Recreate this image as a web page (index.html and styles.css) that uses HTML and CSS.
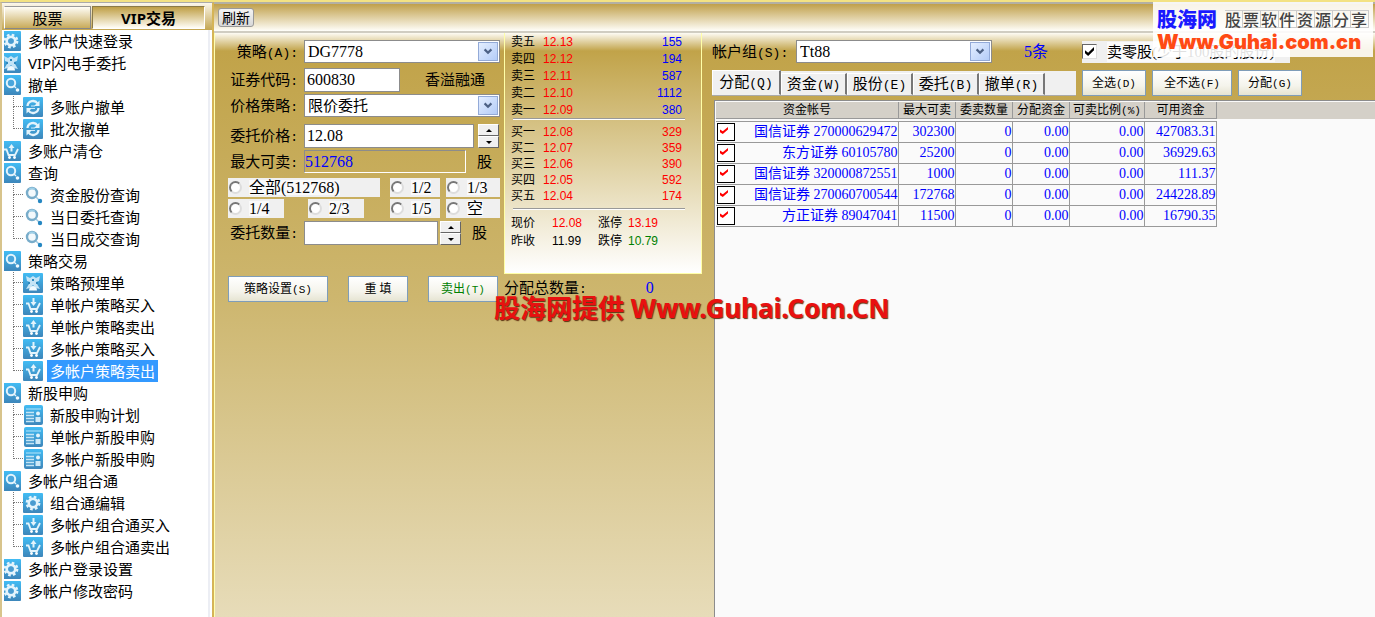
FILE: index.html
```html
<!DOCTYPE html>
<html lang="zh-CN">
<head>
<meta charset="utf-8">
<title>VIP交易</title>
<link rel="stylesheet" href="styles.css">
</head>
<body>
<svg class="defs" aria-hidden="true">
  <defs>
    <linearGradient id="tile" x1="0" y1="0" x2="0" y2="1"><stop offset="0" stop-color="#42bcf4"/><stop offset="1" stop-color="#3d86ba"/></linearGradient>
    <symbol id="gear" viewBox="0 0 20 20"><rect width="20" height="20" rx="1" fill="url(#tile)"/><circle cx="10" cy="10" r="6.2" fill="none" stroke="#e4f4fc" stroke-width="2.4" stroke-dasharray="2.6 2.27"/><circle cx="10" cy="10" r="4.2" fill="none" stroke="#e4f4fc" stroke-width="2.8"/><circle cx="10" cy="10" r="2.6" fill="#4a9bd0"/></symbol>
    <symbol id="flash" viewBox="0 0 20 20"><rect width="20" height="20" rx="1" fill="url(#tile)"/><path d="M3 3l4 2 3-2 3 2 4-2-1 5-3 1 1 2 3 5-4-1-3-3-3 3-4 1 3-5 1-2-3-1z" fill="#c4e4f6"/><path d="M6 17.500c0-6 8-6 8 0z" fill="#f0faff"/><path d="M9 6h2v2H9zM5 9h2v2H5zM13 9h2v2h-2z" fill="#2f89be"/></symbol>
    <symbol id="search" viewBox="0 0 20 20"><rect width="20" height="20" rx="1" fill="url(#tile)"/><circle cx="10" cy="8" r="4.2" fill="#4aa6dc" stroke="#e4f4fc" stroke-width="2"/><path d="M13 11l2 2" stroke="#e4f4fc" stroke-width="1.5"/><circle cx="16.500" cy="15" r="1.800" fill="#f1faff"/></symbol>
    <symbol id="lens" viewBox="0 0 20 20"><circle cx="9" cy="8" r="5" fill="#f3f9fc" stroke="#78acca" stroke-width="2.4"/><path d="M6 4.500a5 5 0 0 1 6 0" fill="none" stroke="#9fd0e8" stroke-width="1.500"/><path d="M13 12l3 3" stroke="#9cc7de" stroke-width="1.5"/><circle cx="17" cy="16" r="2.2" fill="#2587c2"/></symbol>
    <symbol id="cycle" viewBox="0 0 20 20"><rect width="20" height="20" rx="1" fill="url(#tile)"/><path d="M4.500 9C5 3.500 12 2.500 14.500 6.500M15.500 11C15 16.500 8 17.500 5.500 13.500" fill="none" stroke="#e4f4fc" stroke-width="2.300"/><path d="M16.500 3.500v5.500h-5.500zM3.500 16.500V11H9z" fill="#e4f4fc"/><path d="M8 9h4M8 11.500h4" stroke="#cdeafa"/></symbol>
    <symbol id="sell" viewBox="0 0 20 20"><rect width="20" height="20" rx="1" fill="url(#tile)"/><path d="M3 8.500h2.500l2 5.500h6.500l3-6" fill="none" stroke="#e4f4fc" stroke-width="1.800"/><path d="M10.500 3l3 4h-2v3.500h-2V7h-2z" fill="#e4f4fc"/><circle cx="8.500" cy="16.500" r="1.400" fill="#fff"/><circle cx="13.500" cy="16.500" r="1.400" fill="#fff"/></symbol>
    <symbol id="buy" viewBox="0 0 20 20"><rect width="20" height="20" rx="1" fill="url(#tile)"/><path d="M3 8.500h2.500l2 5.500h6.500l3-6" fill="none" stroke="#e4f4fc" stroke-width="1.800"/><path d="M10.500 11l3-4h-2V3h-2v4h-2z" fill="#e4f4fc"/><circle cx="8.500" cy="16.500" r="1.400" fill="#fff"/><circle cx="13.500" cy="16.500" r="1.400" fill="#fff"/></symbol>
    <symbol id="form" viewBox="0 0 20 20"><rect x="1" width="19" height="20" rx="2" fill="url(#tile)"/><path d="M3 4h15" stroke="#8fd4f5" stroke-width="1.500"/><path d="M3 7.500h8M3 10.500h8M3 13.500h8M3 16.500h8" stroke="#c5e6f6" stroke-width="1.500"/><circle cx="15" cy="8.500" r="2" fill="#e4f4fc"/><path d="M12.500 17v-5h5v5z" fill="#cfeaf8"/></symbol>
    <symbol id="chev" viewBox="0 0 20 20"><path d="M6 7.500l4 4 4-4" fill="none" stroke="#4d6185" stroke-width="2.600"/></symbol>
  </defs>
</svg>
<div class="app">
  <aside class="side">
    <div class="side-tabs">
      <button class="stab">股票</button>
      <button class="stab on">VIP交易</button>
    </div>
    <ul class="tree">
      <li><a href="#"><svg><use href="#gear"/></svg><span>多帐户快速登录</span></a></li>
      <li><a href="#"><svg><use href="#flash"/></svg><span>VIP闪电手委托</span></a></li>
      <li><a href="#"><svg><use href="#search"/></svg><span>撤单</span></a>
        <ul>
          <li><i></i><a href="#"><svg><use href="#cycle"/></svg><span>多账户撤单</span></a></li>
          <li><i></i><a href="#"><svg><use href="#cycle"/></svg><span>批次撤单</span></a></li>
        </ul></li>
      <li><a href="#"><svg><use href="#sell"/></svg><span>多账户清仓</span></a></li>
      <li><a href="#"><svg><use href="#search"/></svg><span>查询</span></a>
        <ul>
          <li><i></i><a href="#"><svg><use href="#lens"/></svg><span>资金股份查询</span></a></li>
          <li><i></i><a href="#"><svg><use href="#lens"/></svg><span>当日委托查询</span></a></li>
          <li><i></i><a href="#"><svg><use href="#lens"/></svg><span>当日成交查询</span></a></li>
        </ul></li>
      <li><a href="#"><svg><use href="#search"/></svg><span>策略交易</span></a>
        <ul>
          <li><i></i><a href="#"><svg><use href="#flash"/></svg><span>策略预埋单</span></a></li>
          <li><i></i><a href="#"><svg><use href="#buy"/></svg><span>单帐户策略买入</span></a></li>
          <li><i></i><a href="#"><svg><use href="#sell"/></svg><span>单帐户策略卖出</span></a></li>
          <li><i></i><a href="#"><svg><use href="#buy"/></svg><span>多帐户策略买入</span></a></li>
          <li><i></i><a href="#" class="current"><svg><use href="#sell"/></svg><span>多帐户策略卖出</span></a></li>
        </ul></li>
      <li><a href="#"><svg><use href="#search"/></svg><span>新股申购</span></a>
        <ul>
          <li><i></i><a href="#"><svg><use href="#form"/></svg><span>新股申购计划</span></a></li>
          <li><i></i><a href="#"><svg><use href="#form"/></svg><span>单帐户新股申购</span></a></li>
          <li><i></i><a href="#"><svg><use href="#form"/></svg><span>多帐户新股申购</span></a></li>
        </ul></li>
      <li><a href="#"><svg><use href="#search"/></svg><span>多帐户组合通</span></a>
        <ul>
          <li><i></i><a href="#"><svg><use href="#gear"/></svg><span>组合通编辑</span></a></li>
          <li><i></i><a href="#"><svg><use href="#buy"/></svg><span>多帐户组合通买入</span></a></li>
          <li><i></i><a href="#"><svg><use href="#sell"/></svg><span>多帐户组合通卖出</span></a></li>
        </ul></li>
      <li><a href="#"><svg><use href="#gear"/></svg><span>多帐户登录设置</span></a></li>
      <li><a href="#"><svg><use href="#gear"/></svg><span>多帐户修改密码</span></a></li>
    </ul>
  </aside>

  <main class="main">
    <div class="toolbar"><button class="refresh">刷新</button></div>
    <div class="content">
      <section class="trade">
        <form class="order">
          <div class="row"><label for="strategy">策略<small>(A):</small></label>
            <span class="combo"><select id="strategy"><option>DG7778</option></select><svg><use href="#chev"/></svg></span></div>
          <div class="row"><label for="code">证券代码<small>:</small></label><input id="code" class="box code" value="600830"><span class="stock">香溢融通</span></div>
          <div class="row near"><label for="ptype">价格策略<small>:</small></label>
            <span class="combo"><select id="ptype"><option>限价委托</option></select><svg><use href="#chev"/></svg></span></div>
          <div class="row far"><label for="price">委托价格<small>:</small></label><input id="price" class="box price" value="12.08">
            <span class="spin"><button type="button" aria-label="增加价格"></button><button type="button" aria-label="减少价格"></button></span></div>
          <div class="row near"><label for="max">最大可卖<small>:</small></label><input id="max" class="box max" value="512768" readonly><span class="unit">股</span></div>
          <div class="portions">
            <label class="all"><input type="radio" name="p"><span>全部(512768)</span></label>
            <label class="c3"><input type="radio" name="p"><span>1/2</span></label>
            <label class="c4"><input type="radio" name="p"><span>1/3</span></label>
            <label class="c1"><input type="radio" name="p"><span>1/4</span></label>
            <label class="c2"><input type="radio" name="p"><span>2/3</span></label>
            <label class="c3"><input type="radio" name="p"><span>1/5</span></label>
            <label class="c4"><input type="radio" name="p"><span>空</span></label>
          </div>
          <div class="row near"><label for="qty">委托数量<small>:</small></label><input id="qty" class="box qty">
            <span class="spin tight"><button type="button" aria-label="增加数量"></button><button type="button" aria-label="减少数量"></button></span><span class="unit">股</span></div>
          <div class="actions">
            <button type="button" class="btn w100">策略设置<small>(S)</small></button>
            <button type="button" class="btn w60">重 填</button>
            <button type="button" class="btn w70 green">卖出<small>(T)</small></button>
          </div>
        </form>
        <div class="market">
          <div class="quotes">
            <table class="asks">
              <tr><th>卖五</th><td>12.13</td><td>155</td></tr>
              <tr><th>卖四</th><td>12.12</td><td>194</td></tr>
              <tr><th>卖三</th><td>12.11</td><td>587</td></tr>
              <tr><th>卖二</th><td>12.10</td><td>1112</td></tr>
              <tr><th>卖一</th><td>12.09</td><td>380</td></tr>
            </table>
            <hr>
            <table class="bids">
              <tr><th>买一</th><td>12.08</td><td>329</td></tr>
              <tr><th>买二</th><td>12.07</td><td>359</td></tr>
              <tr><th>买三</th><td>12.06</td><td>390</td></tr>
              <tr><th>买四</th><td>12.05</td><td>592</td></tr>
              <tr><th>买五</th><td>12.04</td><td>174</td></tr>
            </table>
            <hr>
            <dl>
              <dt>现价</dt><dd class="red">12.08</dd><dt>涨停</dt><dd class="red">13.19</dd>
              <dt>昨收</dt><dd>11.99</dd><dt>跌停</dt><dd class="green">10.79</dd>
            </dl>
          </div>
          <div class="total"><span>分配总数量<small>:</small></span><output>0</output></div>
        </div>
      </section>

      <section class="accounts">
        <div class="group">
          <label for="group">帐户组<small>(S):</small></label>
          <span class="combo"><select id="group"><option>Tt88</option></select><svg><use href="#chev"/></svg></span>
          <span class="count">5条</span>
          <label class="odd"><input type="checkbox" checked><span>卖零股(少于100股的股份)</span></label>
        </div>
        <div class="bar">
          <div class="tabs">
            <button class="on">分配<small>(Q)</small></button><button>资金<small>(W)</small></button><button>股份<small>(E)</small></button><button>委托<small>(B)</small></button><button>撤单<small>(R)</small></button>
          </div>
          <button class="btn w64">全选<small>(D)</small></button>
          <button class="btn w80">全不选<small>(F)</small></button>
          <button class="btn w64">分配<small>(G)</small></button>
        </div>
        <div class="grid">
          <div class="grid-head">
            <span class="g1">资金帐号</span><span class="g2">最大可卖</span><span class="g2">委卖数量</span><span class="g2">分配资金</span><span class="g3">可卖比例<small>(%)</small></span><span class="g4">可用资金</span>
          </div>
          <table>
            <colgroup><col class="k0"><col class="k1"><col class="g2"><col class="g2"><col class="g2"><col class="g3"><col class="g4"></colgroup>
            <tr><td><input type="checkbox" aria-label="国信证券 270000629472" checked></td><td>国信证券 270000629472</td><td>302300</td><td>0</td><td>0.00</td><td>0.00</td><td>427083.31</td></tr>
            <tr><td><input type="checkbox" aria-label="东方证券 60105780" checked></td><td>东方证券 60105780</td><td>25200</td><td>0</td><td>0.00</td><td>0.00</td><td>36929.63</td></tr>
            <tr><td><input type="checkbox" aria-label="国信证券 320000872551" checked></td><td>国信证券 320000872551</td><td>1000</td><td>0</td><td>0.00</td><td>0.00</td><td>111.37</td></tr>
            <tr><td><input type="checkbox" aria-label="国信证券 270060700544" checked></td><td>国信证券 270060700544</td><td>172768</td><td>0</td><td>0.00</td><td>0.00</td><td>244228.89</td></tr>
            <tr><td><input type="checkbox" aria-label="方正证券 89047041" checked></td><td>方正证券 89047041</td><td>11500</td><td>0</td><td>0.00</td><td>0.00</td><td>16790.35</td></tr>
          </table>
        </div>
      </section>
    </div>
  </main>
</div>
<div class="brand">
  <div class="brand-top"><b>股海网</b><span class="tiles"><i>股</i><i>票</i><i>软</i><i>件</i><i>资</i><i>源</i><i>分</i><i>享</i></span></div>
  <div class="brand-url">Www.Guhai.com.cn</div>
</div>
<div class="stamp">股海网提供 Www.Guhai.Com.CN</div>
</body>
</html>
```
FILE: styles.css
```css
*, *::before, *::after { box-sizing: border-box; }
body {
  margin: 0;
  height: 100vh;
  overflow: hidden;
  color: #000;
  font: 15px/20px "Liberation Serif", "Noto Sans CJK SC", sans-serif;
}
button, input, select { font: inherit; color: inherit; margin: 0; padding: 0; border-radius: 0; }
small { font-family: "Liberation Mono", monospace; font-size: 13px; line-height: 1; }
.defs { position: absolute; width: 0; height: 0; }
.green { color: #008000; }
.red { color: #f00; }

.app {
  display: flex;
  height: 100%;
  border-top: 2px solid #f3e283;
  background: #f7efb4;
}

/* Navigation */
.side {
  width: 214px;
  flex: none;
  display: flex;
  flex-direction: column;
  border-left: 2px solid #d8c48c;
  border-right: 2px solid #d5b456;
  background: #fff;
  border-top: 1px solid #aaa;
}
.side-tabs {
  display: flex;
  flex: none;
  gap: 1px;
  height: 27px;
  padding: 3px 7px 1px 2px;
  background: linear-gradient(#fbf7ec, #c4a650);
  font: 15px/20px "Noto Sans", "Noto Sans CJK SC", sans-serif;
}
.stab {
  width: 87px;
  border: 1px solid #888;
  border-left-color: #fff;
  border-top-color: #999;
  background: linear-gradient(#fffdf6, #c8ab5a);
}
.stab.on {
  flex: 1;
  font-weight: 700;
  border-color: #8a7a48 #fff #fff #8a7a48;
  background: linear-gradient(#bf9f45, #fffdf6);
}
.tree, .tree ul { list-style: none; margin: 0; padding: 0; }
.tree {
  flex: 1;
  overflow: hidden;
  border-right: 2px solid #eceef4;
  margin: 0 2px;
  font: 15px/22px "Noto Sans", "Noto Sans CJK SC", sans-serif;
}
.tree a { display: flex; align-items: center; height: 22px; color: #000; text-decoration: none; white-space: nowrap; }
.tree a svg { width: 20px; height: 20px; flex: none; margin-left: -3px; }
.tree a span { margin-left: 4px; padding: 0 3px; }
.tree ul li { display: flex; padding-left: 9px; }
.tree ul a svg { margin-left: 0; }
.tree i { width: 10px; }
.tree i::before, .tree i::after { content: ""; display: block; height: 11px; border-left: 1px dotted #777; }
.tree i::before { border-bottom: 1px dotted #777; }
.tree li:last-child > i::after { border: 0; }
.tree .current span { background: #3399ff; color: #fff; }

/* Work area */
.main { flex: 1; min-width: 0; display: flex; flex-direction: column; }
.toolbar {
  flex: none;
  height: 31px;
  padding: 4px;
  border-top: 2px solid #b3b0a4;
  border-bottom: 2px solid #d0cdc2;
  background: linear-gradient(#c0a04a, #fffefa);
}
.refresh {
  display: block;
  width: 36px;
  height: 19px;
  border: 1px solid #999;
  border-radius: 3px;
  background: linear-gradient(#f4f4f4, #d8d8d8);
  font: 14px/16px "Noto Sans", "Noto Sans CJK SC", sans-serif;
}
.content {
  flex: 1;
  min-height: 0;
  display: flex;
  background: linear-gradient(#fdfbf4, #c1a349 18px, #cdb66e 45%, #e7dcb9);
}
.trade { display: flex; flex: none; width: 498px; border-left: 1px solid #ffffb0; }
.order { width: 289px; padding: 7px 0 0 13px; }
.row { display: flex; align-items: center; margin-top: 5px; }
.row:first-child { margin-top: 0; }
.row.near { margin-top: 2px; }
.row.far { margin-top: 7px; }
.row > label { width: 76px; padding-right: 6px; text-align: right; }
.combo { position: relative; display: block; width: 196px; height: 23px; }
.combo select {
  width: 100%;
  height: 100%;
  padding: 0 24px 0 3px;
  appearance: none;
  border: 1px solid #8c8c8c;
  background: #fff;
}
#strategy, #group { font-size: 16px; }
.combo svg {
  position: absolute;
  right: 2px;
  top: 2px;
  width: 20px;
  height: 19px;
  border: 1px solid #93aad8;
  background: linear-gradient(135deg, #e4eeff, #b4ccf8);
  pointer-events: none;
}
.box { height: 24px; padding: 0 2px; border: 1px solid #8c8c8c; background: #fff; font-size: 16px; }
.box.code { width: 96px; }
.box.price { width: 170px; }
.box.qty { width: 134px; }
.box.max { width: 162px; height: 23px; padding: 0; background: none; color: #00f; border-color: #8c8c8c #fff #fff #8c8c8c; }
.stock { margin-left: 25px; }
.unit { margin-left: 11px; }
.spin { display: grid; width: 21px; height: 24px; margin-left: 4px; }
.spin.tight { margin-left: 2px; }
.spin button {
  display: grid;
  place-items: center;
  border: 1px solid;
  border-color: #fff #666 #666 #fff;
  background: #f0f0f0;
}
.spin button::before { content: ""; border: 3px solid transparent; border-top: 0; border-bottom: 3px solid #000; }
.spin button:last-child::before { border-bottom: 0; border-top: 3px solid #000; }

.portions { display: grid; grid-template-columns: 80px 82px 56px 54px; row-gap: 2px; margin-top: 5px; font-size: 16px; }
.portions label { display: flex; align-items: center; height: 19px; background: #f0f0f0; white-space: nowrap; line-height: 15px; }
.portions span { background: #fafafa; margin-left: 7px; }
.portions .all { grid-column: 1 / 3; width: 152px; }
.portions .c1, .portions .c2 { width: 56px; }
.portions .c3 { grid-column: 3; width: 50px; }
.portions input {
  appearance: none;
  width: 13px;
  height: 13px;
  margin-left: 1px;
  border: 2px solid;
  border-color: #777 #ddd #ddd #777;
  border-radius: 50%;
  background: #fff;
}
.portions + .row { margin-top: 3px; }
.actions { display: flex; justify-content: space-between; margin: 31px 6px 0 0; }
.btn {
  height: 26px;
  border: 1px solid #7f9db9;
  background: linear-gradient(#fff, #f5f4ec 60%, #e6e4d2);
  font-size: 12px;
  white-space: nowrap;
}
.btn small, .grid-head small { font-size: 11px; }
.w60 { width: 60px; }
.w64 { width: 64px; }
.w70 { width: 70px; }
.w80 { width: 80px; }
.w100 { width: 100px; }

/* Price ladder */
.market { flex: 1; margin-right: 10px; }
.quotes {
  height: 241px;
  padding: 0 16px 0 6px;
  border: 1px solid #ffffa8;
  border-top: 0;
  background: linear-gradient(#fdfbf4, #c1a349 18px, #e0d2a4 55%, #fff);
  font: 12px/16px "Liberation Sans", "Noto Sans CJK SC", sans-serif;
}
.quotes table { width: 100%; border-collapse: collapse; }
.quotes th, .quotes td { padding: 0; font-weight: 400; text-align: left; height: 16px; }
.quotes .asks th, .quotes .asks td { height: 17px; }
.quotes th { width: 32px; }
.quotes td { color: #f00; }
.quotes td:last-child { text-align: right; padding-right: 3px; }
.quotes .asks td:last-child { color: #00f; }
.quotes hr { height: 2px; margin: 0 0 4px 2px; border: 0; border-top: 1px solid #999; background: #fff; }
.quotes .bids { margin-bottom: 4px; }
.quotes dl { display: grid; grid-template-columns: 41px 46px 30px 1fr; margin: 0; line-height: 18px; }
.quotes dd { margin: 0; }
.total { display: flex; padding-top: 4px; }
.total output { margin-left: 59px; color: #00f; font-size: 16px; }

/* Account allocation */
.accounts { flex: 1; min-width: 0; display: flex; flex-direction: column; padding-top: 7px; }
.group { display: flex; align-items: center; }
.group > label:first-child { width: 84px; }
.count { width: 58px; margin-left: 32px; color: #00f; font-size: 16px; }
.odd { display: flex; align-items: center; width: 208px; height: 22px; background: #f0f0f0; white-space: nowrap; }
.odd span { margin-left: 10px; background: #fafafa; }
.odd input { appearance: none; width: 15px; height: 15px; border: 1px solid; border-color: #666 #ddd #ddd #666; background: #fff; }
.odd input::before {
  content: "";
  display: block;
  width: 9px;
  height: 9px;
  margin: 2px;
  background: #000;
  clip-path: polygon(0 35%, 35% 65%, 100% 0, 100% 35%, 35% 100%, 0 70%);
}
.bar { display: flex; align-items: center; gap: 6px; margin-top: 7px; }
.tabs { display: flex; align-items: flex-end; width: 364px; height: 25px; background: #f0f0f0; border-bottom: 1px solid #aaa; }
.tabs button { width: 66px; height: 22px; border: 1px solid; border-color: #fff #777 #f0f0f0 #fff; border-right-width: 2px; background: #f0f0f0; }
.tabs .on { width: 69px; height: 25px; }
.grid { flex: 1; margin: 4px 0 0 2px; border: solid #8c8c8c; border-width: 1px 0 0 1px; background: #fafafa; padding: 1px 0 0 1px; }
.grid-head { display: flex; height: 17px; margin-bottom: 2px; background: #d4d0c8; font-size: 12px; line-height: 16px; text-align: center; white-space: nowrap; }
.grid-head span { border-right: 1px solid #999; border-bottom: 1px solid #999; }
.grid-head .g1 { width: 183px; }
.g2 { width: 57px; }
.g3 { width: 75px; }
.g4 { width: 72px; }
.grid table { width: 500px; table-layout: fixed; border-collapse: collapse; font-size: 14px; line-height: 20px; color: #00f; }
.k0 { width: 20px; }
.k1 { width: 162px; }
.grid td { height: 21px; padding: 0; border: 1px solid #999; text-align: right; white-space: nowrap; }
.grid td:first-child, .grid td:nth-child(2) { border-left: 0; }
.grid td:first-child { border-right: 0; }
.grid td input { display: block; appearance: none; width: 18px; height: 18px; margin-left: 1px; border: 1px solid #000; background: #fff; }
.grid td input::before {
  content: "";
  display: block;
  width: 8px;
  height: 7px;
  margin: 3px 2px;
  background: #f00;
  clip-path: polygon(0 35%, 35% 60%, 100% 0, 100% 35%, 35% 100%, 0 75%);
}

/* Site marks laid over the window */
.brand { position: absolute; top: 2px; right: 2px; width: 220px; height: 55px; padding: 4px 4px 0; background: rgba(255, 255, 255, 0.88); }
.brand-top { display: flex; align-items: center; justify-content: space-between; height: 25px; }
.brand-top b { color: #1a1aff; font: 900 20px/25px "Noto Sans CJK SC", sans-serif; }
.tiles { display: flex; }
.tiles i { width: 18px; height: 18px; border: 1px solid #ccc; border-left-width: 0; color: #444; font: normal 500 16px/16px "Noto Sans CJK SC", sans-serif; }
.brand-url { color: #ff4a14; font: 900 20px/22px Inter, sans-serif; white-space: nowrap; }
.stamp {
  position: absolute;
  left: 494px;
  top: 292px;
  color: #e81010;
  font: 700 26px/32px "Noto Sans", "Noto Sans CJK SC", sans-serif;
  text-shadow: 1px 1px 1px #5a3010;
  white-space: nowrap;
}
```
